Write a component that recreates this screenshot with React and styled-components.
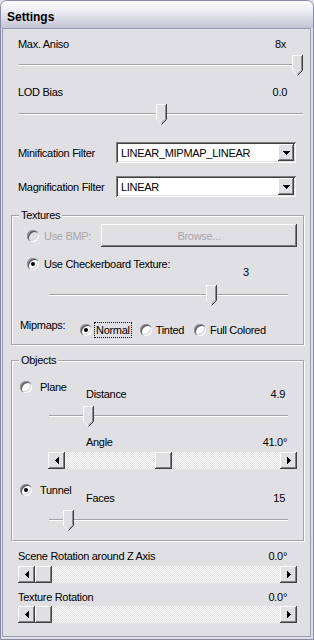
import styled, { createGlobalStyle, css } from "styled-components";

const FACE = "#e0dfe3";

const GlobalStyle = createGlobalStyle`
  html, body {
    margin: 0;
    padding: 0;
    background: ${FACE};
  }
  body {
    font-family: "Liberation Sans", Arial, sans-serif;
    font-size: 11px;
    letter-spacing: -0.3px;
    color: #000;
  }
`;

const raised = css`
  background: ${FACE};
  box-shadow: inset -1px -1px #404040, inset 1px 1px #fff,
    inset -2px -2px #808080, inset 2px 2px ${FACE};
`;

const Window = styled.div`
  width: 314px;
  height: 640px;
  box-sizing: border-box;
  border: 1px solid #8a8aa6;
  border-radius: 7px 7px 0 0;
  background: ${FACE};
  display: flex;
  flex-direction: column;
  overflow: hidden;
`;

const TitleBar = styled.div`
  height: 27px;
  flex: none;
  box-sizing: border-box;
  padding: 4px 0 0 6px;
  display: flex;
  align-items: center;
  background: linear-gradient(to bottom, #fdfdfe 0%, #ededf3 35%, #c4c4d6 100%);
  font-weight: bold;
  font-size: 12px;
  letter-spacing: 0;
`;

const Body = styled.div`
  flex: 1;
  margin: 0 2px 2px 1px;
  border: 1px solid #9a9ab2;
  display: flex;
  flex-direction: column;
`;

const TextRow = styled.div`
  display: flex;
  justify-content: space-between;
  height: 14px;
  line-height: 14px;
  margin: ${(p) => p.$mt || 0}px ${(p) => p.$right || 0}px 0 ${(p) => p.$left || 0}px;
`;

const SliderWrap = styled.div`
  position: relative;
  box-sizing: border-box;
  height: 21px;
  padding-top: 9px;
  width: ${(p) => p.$w}px;
  margin: ${(p) => p.$mt}px 0 0 ${(p) => p.$left}px;
`;

const Channel = styled.div`
  height: 1px;
  background: #a2a1a6;
  border-bottom: 1px solid #fff;
`;

const ThumbBox = styled.svg`
  position: absolute;
  top: 0;
`;

function Slider({ w, left, mt, pos }) {
  return (
    <SliderWrap $w={w} $left={left} $mt={mt}>
      <Channel />
      <ThumbBox width="11" height="21" viewBox="0 0 11 21" style={{ left: pos }}>
        <path d="M0 0H11V15.5L5.5 21L0 15.5Z" fill={FACE} />
        <path d="M0.5 15.5V0.5H10" stroke="#fff" fill="none" />
        <path d="M0.5 15.5L5.3 20.3" stroke="#f4f4f6" fill="none" />
        <path d="M10.5 0V15.5L5.5 20.5" stroke="#404040" fill="none" />
        <path d="M9.5 1V15.1L5.5 19.1" stroke="#8d8d92" fill="none" />
      </ThumbBox>
    </SliderWrap>
  );
}

const ScrollBar = styled.div`
  display: flex;
  height: 17px;
  width: ${(p) => p.$w}px;
  margin: ${(p) => p.$mt}px 0 0 ${(p) => p.$left}px;
  background-color: #fff;
  background-image: conic-gradient(${FACE} 25%, #fff 0 50%, ${FACE} 0 75%, #fff 0);
  background-size: 2px 2px;
`;

const ScrollButton = styled.div`
  ${raised};
  width: 17px;
  height: 17px;
  flex: none;
  display: flex;
  align-items: center;
  justify-content: center;
`;

const ScrollTrack = styled.div`
  flex: 1;
  position: relative;
`;

const ScrollThumb = styled.div`
  ${raised};
  position: absolute;
  top: 0;
  width: 17px;
  height: 17px;
`;

const Arrow = ({ dir }) => (
  <svg width="4" height="7" viewBox="0 0 4 7" shapeRendering="crispEdges">
    {dir === "left" ? (
      <>
        <rect x="0" y="3" width="1" height="1" />
        <rect x="1" y="2" width="1" height="3" />
        <rect x="2" y="1" width="1" height="5" />
        <rect x="3" y="0" width="1" height="7" />
      </>
    ) : (
      <>
        <rect x="0" y="0" width="1" height="7" />
        <rect x="1" y="1" width="1" height="5" />
        <rect x="2" y="2" width="1" height="3" />
        <rect x="3" y="3" width="1" height="1" />
      </>
    )}
  </svg>
);

function HScroll({ w, left, mt, pos }) {
  return (
    <ScrollBar $w={w} $left={left} $mt={mt}>
      <ScrollButton>
        <Arrow dir="left" />
      </ScrollButton>
      <ScrollTrack>
        <ScrollThumb style={{ left: pos }} />
      </ScrollTrack>
      <ScrollButton>
        <Arrow dir="right" />
      </ScrollButton>
    </ScrollBar>
  );
}

const ComboRow = styled.div`
  display: flex;
  align-items: center;
  height: 21px;
  margin: ${(p) => p.$mt}px 0 0 15px;
`;

const ComboLabel = styled.span`
  width: 98px;
  flex: none;
`;

const Combo = styled.div`
  width: 180px;
  height: 21px;
  box-sizing: border-box;
  padding: 2px 2px 2px 5px;
  display: flex;
  align-items: center;
  justify-content: space-between;
  background: #fff;
  box-shadow: inset 1px 1px #808080, inset -1px -1px #fff,
    inset 2px 2px #404040, inset -2px -2px ${FACE};
`;

const ComboButton = styled.div`
  ${raised};
  width: 16px;
  height: 17px;
  display: flex;
  align-items: center;
  justify-content: center;
`;

const DownArrow = () => (
  <svg width="7" height="4" viewBox="0 0 7 4" shapeRendering="crispEdges">
    <rect x="0" y="0" width="7" height="1" />
    <rect x="1" y="1" width="5" height="1" />
    <rect x="2" y="2" width="3" height="1" />
    <rect x="3" y="3" width="1" height="1" />
  </svg>
);

function ComboBox({ label, value, mt }) {
  return (
    <ComboRow $mt={mt}>
      <ComboLabel>{label}</ComboLabel>
      <Combo>
        <span>{value}</span>
        <ComboButton>
          <DownArrow />
        </ComboButton>
      </Combo>
    </ComboRow>
  );
}

const Group = styled.fieldset`
  margin: ${(p) => p.$mt}px 6px 0 8px;
  padding: 0 0 ${(p) => p.$pb}px 0;
  border: 1px solid #a3a2a8;
  box-shadow: inset 1px 1px #fff, 1px 1px #fff;
  min-width: 0;
`;

const Legend = styled.legend`
  margin-left: 7px;
  padding: 0 2px;
  line-height: 14px;
  background: ${FACE};
`;

const RadioDot = styled.span`
  position: relative;
  flex: none;
  width: 12px;
  height: 12px;
  border-radius: 50%;
  background: ${(p) => (p.$disabled ? FACE : "#fff")};
  box-shadow: inset 1px 1px #9a9aa0, inset 2px 2px #55555a,
    inset -1px -1px #fff, inset -2px -2px #d6d5da;
  &::after {
    content: "";
    display: ${(p) => (p.$checked ? "block" : "none")};
    position: absolute;
    left: 4px;
    top: 4px;
    width: 4px;
    height: 4px;
    border-radius: 50%;
    background: #000;
  }
`;

const RadioLabel = styled.label`
  display: flex;
  align-items: center;
  gap: ${(p) => p.$gap}px;
  color: ${(p) => (p.$disabled ? "#a9a8ad" : "#000")};
`;

const RadioText = styled.span`
  line-height: 14px;
  padding: 0 1px;
  border: 1px dotted ${(p) => (p.$focus ? "#000" : "transparent")};
`;

function Radio({ label, checked, disabled, focus, gap = 2 }) {
  return (
    <RadioLabel $gap={gap} $disabled={disabled}>
      <RadioDot $checked={checked} $disabled={disabled} />
      <RadioText $focus={focus}>{label}</RadioText>
    </RadioLabel>
  );
}

const Row = styled.div`
  display: flex;
  align-items: center;
  height: ${(p) => p.$h}px;
  margin-top: ${(p) => p.$mt}px;
  padding: 0 ${(p) => p.$right || 0}px 0 ${(p) => p.$left || 0}px;
  gap: ${(p) => p.$gap || 0}px;
`;

const PushButton = styled.div`
  ${raised};
  margin-left: auto;
  width: 196px;
  height: 23px;
  display: flex;
  align-items: center;
  justify-content: center;
  color: #a9a8ad;
`;

const MipLabel = styled.span`
  width: 52px;
  flex: none;
  align-self: flex-start;
  line-height: 14px;
  margin-top: -3px;
`;

export default function App() {
  return (
    <>
      <GlobalStyle />
      <Window>
        <TitleBar>Settings</TitleBar>
        <Body>
          <TextRow $mt={8} $left={15} $right={24}>
            <span>Max. Aniso</span>
            <span>8x</span>
          </TextRow>
          <Slider w={284} left={16} mt={4} pos={273} />
          <TextRow $mt={9} $left={15} $right={23}>
            <span>LOD Bias</span>
            <span>0.0</span>
          </TextRow>
          <Slider w={284} left={16} mt={5} pos={137} />

          <ComboBox label="Minification Filter" value="LINEAR_MIPMAP_LINEAR" mt={17} />
          <ComboBox label="Magnification Filter" value="LINEAR" mt={13} />

          <Group $mt={11} $pb={6}>
            <Legend>Textures</Legend>
            <Row $h={23} $mt={2} $left={15} $right={6}>
              <Radio label="Use BMP:" disabled gap={3} />
              <PushButton>Browse...</PushButton>
            </Row>
            <Row $h={14} $mt={10} $left={15}>
              <Radio label="Use Checkerboard Texture:" checked gap={3} />
            </Row>
            <TextRow $mt={-6} $left={231}>
              <span>3</span>
            </TextRow>
            <Slider w={239} left={37} mt={6} pos={157} />
            <Row $h={17} $mt={15} $left={8} $gap={8}>
              <MipLabel>Mipmaps:</MipLabel>
              <Radio label="Normal" checked focus />
              <Radio label="Tinted" />
              <Radio label="Full Colored" />
            </Row>
          </Group>

          <Group $mt={8} $pb={9}>
            <Legend>Objects</Legend>
            <Row $h={14} $mt={13} $left={8}>
              <Radio label="Plane" gap={6} />
            </Row>
            <TextRow $mt={-7} $left={74} $right={18}>
              <span>Distance</span>
              <span>4.9</span>
            </TextRow>
            <Slider w={239} left={37} mt={5} pos={34} />
            <TextRow $mt={8} $left={74} $right={16}>
              <span>Angle</span>
              <span>41.0°</span>
            </TextRow>
            <HScroll w={249} left={36} mt={3} pos={90} />
            <Row $h={14} $mt={14} $left={8}>
              <Radio label="Tunnel" checked gap={6} />
            </Row>
            <TextRow $mt={-6} $left={74} $right={18}>
              <span>Faces</span>
              <span>15</span>
            </TextRow>
            <Slider w={239} left={37} mt={5} pos={14} />
          </Group>

          <TextRow $mt={8} $left={15} $right={23}>
            <span>Scene Rotation around Z Axis</span>
            <span>0.0°</span>
          </TextRow>
          <HScroll w={279} left={15} mt={3} pos={0} />
          <TextRow $mt={7} $left={15} $right={23}>
            <span>Texture Rotation</span>
            <span>0.0°</span>
          </TextRow>
          <HScroll w={279} left={15} mt={2} pos={0} />
        </Body>
      </Window>
    </>
  );
}
